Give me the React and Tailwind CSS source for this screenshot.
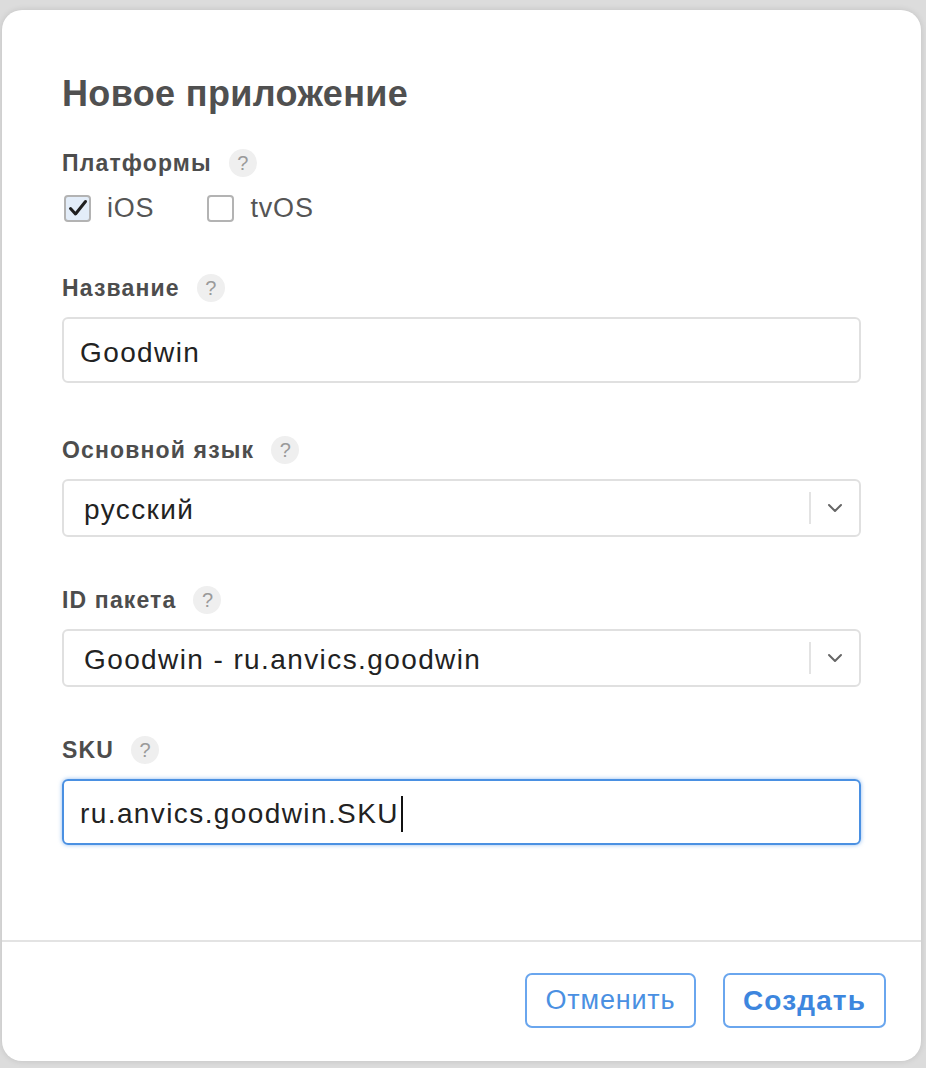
import React from 'react';

const font = { fontFamily: '"Liberation Sans", Arial, sans-serif' };

const Help = () => (
    <span className="ml-[17px] flex h-[28px] w-[28px] items-center justify-center rounded-full bg-[#efefef] text-[20px] font-normal tracking-normal text-[#9a9a9a]">?</span>
);

const Label = ({ children, className = '' }) => (
    <div className={`flex h-[28px] items-center text-[23px] font-bold tracking-[0.05em] text-[#4d4d4d] ${className}`}>
        {children}
        <Help />
    </div>
);

const Chevron = () => (
    <svg width="16" height="10" viewBox="0 0 16 10" fill="none">
        <path d="M2 2l6 6 6-6" stroke="#666" strokeWidth="2" strokeLinecap="round" strokeLinejoin="round" />
    </svg>
);

const Select = ({ value, className = '' }) => (
    <div className={`flex h-[58px] items-center rounded-[6px] border-2 border-[#e0e0e0] bg-white ${className}`}>
        <span className="flex-1 pl-[20px] pt-[3px] text-[28px] tracking-[0.05em] text-[#222]">{value}</span>
        <span className="h-[32px] w-[2px] bg-[#e3e3e3]" />
        <span className="flex w-[48px] items-center justify-center"><Chevron /></span>
    </div>
);

const Checkbox = ({ checked, label }) => (
    <label className="flex items-center">
        <span className={`flex h-[27px] w-[27px] items-center justify-center rounded-[4px] border-2 border-[#b3b3b3] ${checked ? 'bg-[#e3edf9]' : 'bg-white'}`}>
            {checked && (
                <svg width="20" height="18" viewBox="0 0 20 18" fill="none">
                    <path d="M2.5 9.5l5 5.5L17.5 2.5" stroke="#1f1f1f" strokeWidth="3" strokeLinecap="round" strokeLinejoin="round" />
                </svg>
            )}
        </span>
        <span className="ml-[16px] text-[27px] tracking-[0.03em] text-[#555]">{label}</span>
    </label>
);

export default function App() {
    return (
        <div className="min-h-[1068px] bg-[#dcdcdc] pl-[2px] pt-[10px]" style={font}>
            <div className="flex h-[1051px] w-[919px] flex-col rounded-[20px] bg-white shadow-[0_0_6px_rgba(0,0,0,0.12)]">
                <div className="px-[60px] pt-[64px]">
                    <h1 className="text-[36px] font-bold leading-[40px] tracking-[0.01em] text-[#505050]">Новое приложение</h1>

                    <Label className="mt-[35px]">Платформы</Label>
                    <div className="mt-[17px] flex h-[28px] items-center gap-[53px] pl-[2px]">
                        <Checkbox checked label="iOS" />
                        <Checkbox label="tvOS" />
                    </div>

                    <Label className="mt-[52px]">Название</Label>
                    <div className="mt-[15px] flex h-[66px] items-center rounded-[6px] border-2 border-[#e0e0e0] pl-[16px] pt-[5px] text-[28px] tracking-[0.05em] text-[#222]">
                        Goodwin
                    </div>

                    <Label className="mt-[53px]">Основной язык</Label>
                    <Select className="mt-[15px]" value="русский" />

                    <Label className="mt-[49px]">ID пакета</Label>
                    <Select className="mt-[15px]" value="Goodwin - ru.anvics.goodwin" />

                    <Label className="mt-[49px]">SKU</Label>
                    <div className="mt-[15px] flex h-[66px] items-center rounded-[6px] border-2 border-[#4a90e2] pl-[16px] pt-[3px] text-[28px] tracking-[0.05em] text-[#222] shadow-[0_0_4px_rgba(74,144,226,0.6)]">
                        ru.anvics.goodwin.SKU
                        <span className="ml-[2px] h-[36px] w-[2px] bg-[#111]" />
                    </div>
                </div>

                <div className="mt-[95px] border-t-2 border-[#e3e3e3]" />

                <div className="flex justify-end gap-[27px] pr-[35px] pt-[31px]">
                    <button className="h-[55px] w-[171px] rounded-[7px] border-2 border-[#6aa6ee] text-[27px] tracking-[0.03em] text-[#4a90e2]">Отменить</button>
                    <button className="h-[55px] w-[163px] rounded-[7px] border-2 border-[#6aa6ee] text-[28px] font-bold tracking-[0.04em] text-[#3d86de]">Создать</button>
                </div>
            </div>
        </div>
    );
}
